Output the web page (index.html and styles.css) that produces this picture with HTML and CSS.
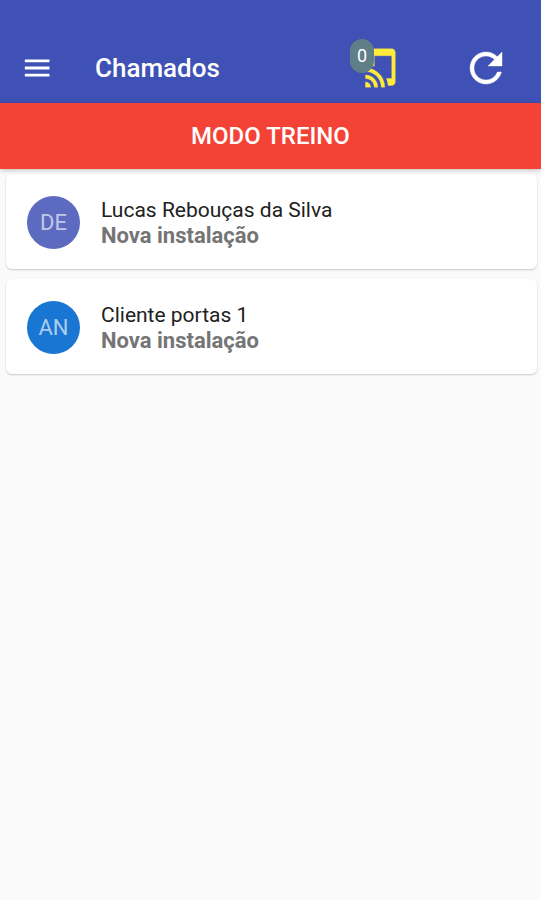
FILE: index.html
```html
<!DOCTYPE html>
<html lang="pt-BR">
<head>
    <meta charset="UTF-8">
    <meta name="viewport" content="width=device-width, initial-scale=1.0">
    <title>Chamados</title>
    <link rel="stylesheet" href="styles.css">
</head>
<body>

<!-- Top bar -->
<header class="toolbar">
    <button class="icon-btn menu-btn" aria-label="Menu">
        <svg width="34" height="34" viewBox="0 0 24 24"><path d="M3.4 18h17.4v-2H3.4v2zm0-5h17.4v-2H3.4v2zm0-7v2h17.4V6H3.4z"/></svg>
    </button>
    <h1>Chamados</h1>
    <button class="icon-btn sync-btn" aria-label="Sincronizar">
        <svg width="42" height="42" viewBox="0 0 24 24"><path d="M2 16v2c2.76 0 5 2.24 5 5h2c0-3.87-3.13-7-7-7zm0 4v3h3c0-1.66-1.34-3-3-3zm0-8v2c4.97 0 9 4.03 9 9h2c0-6.08-4.92-11-11-11zM17 1.01L7 1c-1.1 0-2 .9-2 2v7.37c.69.16 1.36.37 2 .64V5h10v13h-3.03c.52 1.25.84 2.59.95 4H17c1.1 0 2-.9 2-2V3c0-1.1-.9-1.99-2-1.99z" stroke="currentColor" stroke-width="0.2"/></svg>
        <span class="badge">0</span>
    </button>
    <button class="icon-btn" aria-label="Atualizar">
        <svg width="48" height="48" viewBox="0 0 24 24"><path d="M17.65 6.35C16.2 4.9 14.21 4 12 4c-4.42 0-7.99 3.58-7.99 8s3.57 8 7.99 8c3.73 0 6.84-2.55 7.73-6h-2.08c-.82 2.33-3.04 4-5.65 4-3.31 0-6-2.69-6-6s2.69-6 6-6c1.66 0 3.14.69 4.22 1.78L13 11h7V4l-2.35 2.35z" stroke="currentColor" stroke-width="0.2"/></svg>
    </button>
</header>

<div class="banner">MODO TREINO</div>

<!-- Tickets -->
<main class="list">
    <a href="#" class="card">
        <span class="avatar indigo">DE</span>
        <span class="info">
            <span class="name">Lucas Rebouças da Silva</span>
            <span class="type">Nova instalação</span>
        </span>
    </a>
    <a href="#" class="card">
        <span class="avatar blue">AN</span>
        <span class="info">
            <span class="name">Cliente portas 1</span>
            <span class="type">Nova instalação</span>
        </span>
    </a>
</main>

</body>
</html>
```
FILE: styles.css
```css
body {
    margin: 0;
    min-height: 100vh;
    background-color: #fafafa;
    font-family: Roboto, "Liberation Sans", sans-serif;
}
.toolbar {
    display: flex;
    align-items: center;
    padding: 34px 31px 1px 20px;
    height: 68px;
    background-color: #3f51b5;
    color: #fff;
}
.toolbar h1 {
    flex: 1;
    margin: 0;
    font-size: 26px;
    line-height: 32px;
    font-weight: 500;
}
.icon-btn {
    display: block;
    position: relative;
    padding: 0;
    border: none;
    background: none;
    color: #fff;
    font-family: inherit;
    cursor: pointer;
}
.icon-btn svg {
    display: block;
    fill: currentColor;
}
.menu-btn { margin-right: 41px; }
.sync-btn {
    margin-right: 58px;
    color: #ffeb3b;
}
.badge {
    position: absolute;
    top: -8px;
    left: -12px;
    width: 24px;
    border-radius: 12px;
    background-color: #5f7f88;
    color: #fff;
    font-size: 18px;
    line-height: 34px;
    text-align: center;
}
.banner {
    position: relative;
    background-color: #f44336;
    color: #fff;
    font-size: 24px;
    line-height: 66px;
    font-weight: 500;
    text-align: center;
    box-shadow: 0 1px 5px rgba(0, 0, 0, 0.25);
}
.list {
    display: flex;
    flex-direction: column;
    gap: 10px;
    padding: 5px 4px 5px 6px;
}
.card {
    display: flex;
    align-items: center;
    gap: 21px;
    padding: 21px 20px 20px 21px;
    background-color: #fff;
    border-radius: 6px;
    box-shadow: 0 1px 2px rgba(0, 0, 0, 0.2);
    text-decoration: none;
}
.avatar {
    width: 53px;
    border-radius: 50%;
    color: rgba(255, 255, 255, 0.65);
    font-size: 22px;
    line-height: 53px;
    text-align: center;
}
.indigo { background-color: #5c6bc0; }
.blue { background-color: #1976d2; }
.info {
    display: flex;
    flex-direction: column;
    padding-top: 2px;
    line-height: 26px;
}
.name {
    color: #212121;
    font-size: 21px;
}
.type {
    color: #757575;
    font-size: 22px;
    font-weight: bold;
}
```
